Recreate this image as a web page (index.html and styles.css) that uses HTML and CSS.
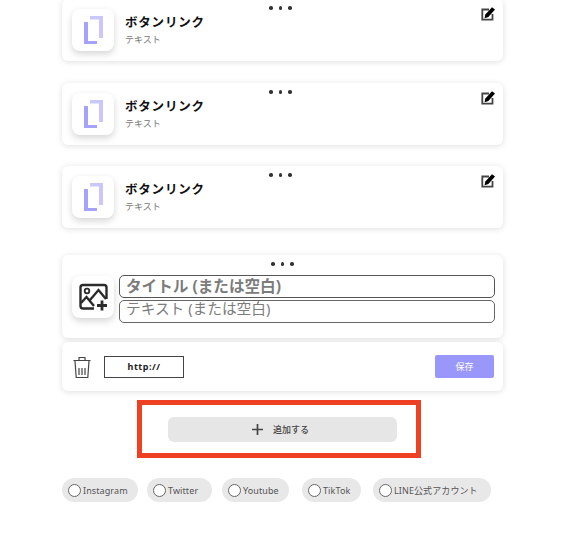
FILE: index.html
```html
<!DOCTYPE html>
<html>

<head>
    <meta charset="utf-8">
    <title>リンク編集</title>
    <link rel="stylesheet" href="styles.css">
</head>

<body>
    <div id="page">
        <div class="card link-card">
            <span class="dots"><i></i><i></i><i></i></span>
            <div class="tile">
                <svg width="42" height="42" viewBox="0 0 42 42">
                    <path fill="#c9c7fc" d="M18 7h13v22h-4V10.500h-9z" />
                    <path fill="#a5a2fb" d="M12 13h4v19h9v3H12z" />
                </svg>
            </div>
            <div class="link-text">
                <div class="link-title">ボタンリンク</div>
                <div class="link-sub">テキスト</div>
            </div>
            <svg class="edit" width="14" height="14" viewBox="0 0 14 14">
                <path fill="none" stroke="#444" stroke-width="1.800" d="M8 2.500H1.300v10.200h10.200V7" />
                <path fill="#000" d="M11 .2l3 2.300-6.600 7.500-3.800 1.200.7-3.700z" />
            </svg>
        </div>
        <div class="card link-card">
            <span class="dots"><i></i><i></i><i></i></span>
            <div class="tile">
                <svg width="42" height="42" viewBox="0 0 42 42">
                    <path fill="#c9c7fc" d="M18 7h13v22h-4V10.500h-9z" />
                    <path fill="#a5a2fb" d="M12 13h4v19h9v3H12z" />
                </svg>
            </div>
            <div class="link-text">
                <div class="link-title">ボタンリンク</div>
                <div class="link-sub">テキスト</div>
            </div>
            <svg class="edit" width="14" height="14" viewBox="0 0 14 14">
                <path fill="none" stroke="#444" stroke-width="1.800" d="M8 2.500H1.300v10.200h10.200V7" />
                <path fill="#000" d="M11 .2l3 2.300-6.600 7.500-3.800 1.200.7-3.700z" />
            </svg>
        </div>
        <div class="card link-card">
            <span class="dots"><i></i><i></i><i></i></span>
            <div class="tile">
                <svg width="42" height="42" viewBox="0 0 42 42">
                    <path fill="#c9c7fc" d="M18 7h13v22h-4V10.500h-9z" />
                    <path fill="#a5a2fb" d="M12 13h4v19h9v3H12z" />
                </svg>
            </div>
            <div class="link-text">
                <div class="link-title">ボタンリンク</div>
                <div class="link-sub">テキスト</div>
            </div>
            <svg class="edit" width="14" height="14" viewBox="0 0 14 14">
                <path fill="none" stroke="#444" stroke-width="1.800" d="M8 2.500H1.300v10.200h10.200V7" />
                <path fill="#000" d="M11 .2l3 2.300-6.600 7.500-3.800 1.200.7-3.700z" />
            </svg>
        </div>

        <div class="card edit-card">
            <span class="dots"><i></i><i></i><i></i></span>
            <div class="tile">
                <svg width="42" height="42" viewBox="0 0 42 42" fill="none" stroke="#2b2b2b" stroke-width="2.400">
                    <path d="M22 32.500H11a2.500 2.500 0 0 1-2.500-2.500V11.500A2.500 2.500 0 0 1 11 9h21a2.500 2.500 0 0 1 2.500 2.500V23" />
                    <circle cx="15" cy="15" r="2.300" stroke-width="1.800" />
                    <path d="M9 27l5.500-6 7.500 9M18 24l8.500-10 7.500 9" />
                    <path stroke-width="2.800" d="M30 24.500v10M25 29.500h10" />
                </svg>
            </div>
            <div class="edit-fields">
                <input class="field field-title" type="text" placeholder="タイトル (または空白)">
                <input class="field field-sub" type="text" placeholder="テキスト (または空白)">
            </div>
        </div>
        <div class="card url-card">
            <svg class="trash" width="20" height="24" viewBox="0 0 20 24" fill="none" stroke="#444" stroke-width="1.200">
                <path d="M1.500 5.500h17M7 5V2.500h6V5M3 6l1.200 16.500h11.600L17 6" />
                <path d="M7 13v7M10 13v7M13 13v7" />
            </svg>
            <div class="url-box">http://</div>
            <button class="save">保存</button>
        </div>

        <div class="add-frame">
            <button class="add">
                <svg width="11" height="11" viewBox="0 0 11 11">
                    <path fill="none" stroke="#444" stroke-width="1.700" d="M5.500 0v11M0 5.500h11" />
                </svg>
                <span>追加する</span>
            </button>
        </div>

        <div class="pills">
            <label class="pill pill-instagram"><span class="radio"></span>Instagram</label>
            <label class="pill pill-twitter"><span class="radio"></span>Twitter</label>
            <label class="pill pill-youtube"><span class="radio"></span>Youtube</label>
            <label class="pill pill-tiktok"><span class="radio"></span>TikTok</label>
            <label class="pill pill-line"><span class="radio"></span>LINE公式アカウント</label>
        </div>
    </div>
</body>

</html>
```

FILE: styles.css
```css
html,
body {
    height: 100%;
    overflow: hidden;
}

body {
    margin: 0;
    background: #fff;
    color: #222;
    font-family: "Noto Sans", "Noto Sans CJK JP", sans-serif;
}

#page {
    width: 441px;
    margin: -1px 0 0 62px;
    display: flex;
    flex-direction: column;
}

.card {
    position: relative;
    background: #fff;
    border-radius: 6px;
    box-shadow: 0 1px 6px rgba(0, 0, 0, 0.13);
    display: flex;
    align-items: center;
}

.dots {
    position: absolute;
    top: 7px;
    left: 207px;
    display: flex;
    gap: 6px;
}

.dots i {
    width: 3.500px;
    height: 3.500px;
    border-radius: 50%;
    background: #333;
}

.tile {
    width: 42px;
    height: 42px;
    border-radius: 8px;
    background: #fff;
    box-shadow: 0 3px 7px rgba(0, 0, 0, 0.17);
    flex-shrink: 0;
}

.tile svg {
    display: block;
}

.link-card {
    height: 62px;
    margin-bottom: 22px;
    padding: 0 10px;
}

.link-card:nth-child(2) {
    margin-bottom: 21px;
}

.link-card:nth-child(3) {
    margin-bottom: 27px;
}

.link-text {
    margin-left: 11px;
}

.link-title {
    font-size: 12.500px;
    line-height: 17px;
    font-weight: 700;
    letter-spacing: 0.8px;
    color: #111;
}

.link-sub {
    font-size: 9px;
    line-height: 13px;
    margin-top: 2px;
    color: #777;
}

.edit {
    position: absolute;
    top: 8px;
    right: 8px;
}

.edit-card {
    height: 83px;
    padding: 0 8px 0 10px;
    margin-bottom: 4px;
}

.edit-card .dots {
    left: 209px;
}

.edit-fields {
    flex: 1;
    margin-left: 5px;
    display: flex;
    flex-direction: column;
    gap: 2px;
    margin-top: 4px;
}

.field {
    box-sizing: border-box;
    width: 100%;
    height: 23px;
    padding: 0 6px;
    border: 1.500px solid #666;
    border-radius: 5px;
    outline: none;
    background: #fff;
    font-family: inherit;
}

.field::placeholder {
    color: #7c7c7c;
    opacity: 1;
}

.field-title {
    font-size: 15.600px;
    font-weight: 700;
    border-color: #555;
}

.field-sub {
    font-size: 14.700px;
    padding-bottom: 6px;
}

.url-card {
    height: 49px;
    padding: 0 9px 0 10px;
}

.trash {
    display: block;
}

.url-box {
    box-sizing: border-box;
    width: 80px;
    height: 22px;
    margin-left: 12px;
    border: 1px solid #444;
    font-size: 9px;
    font-weight: 700;
    letter-spacing: 0.5px;
    line-height: 20px;
    text-align: center;
}

.save {
    width: 59px;
    height: 23px;
    margin-left: auto;
    padding: 0;
    border: none;
    border-radius: 2px;
    background: #9a97fb;
    color: #fff;
    font-family: inherit;
    font-size: 9px;
}

.add-frame {
    box-sizing: border-box;
    width: 284px;
    height: 58px;
    margin: 9px 0 20px 75px;
    padding-left: 7px;
    border: 5px solid #ee4023;
    display: flex;
    align-items: center;
    justify-content: center;
}

.add {
    width: 229px;
    height: 25px;
    flex-shrink: 0;
    padding: 1px 4px 0 0;
    border: none;
    border-radius: 6px;
    background: #e6e6e6;
    color: #444;
    font-family: inherit;
    font-size: 9px;
    font-weight: 500;
    display: flex;
    align-items: center;
    justify-content: center;
    gap: 10px;
}

.pills {
    display: flex;
}

.pill {
    box-sizing: border-box;
    height: 24px;
    padding-left: 6px;
    border-radius: 12px;
    background: #e8e8e8;
    color: #555;
    font-size: 9px;
    letter-spacing: 0.1px;
    display: flex;
    align-items: center;
    gap: 2px;
}

.pill-instagram {
    width: 76px;
    margin-right: 9px;
}

.pill-twitter {
    width: 65px;
    margin-right: 10px;
}

.pill-youtube {
    width: 67px;
    margin-right: 13px;
}

.pill-tiktok {
    width: 59px;
    margin-right: 12px;
}

.pill-line {
    width: 118px;
}

.radio {
    box-sizing: border-box;
    width: 13px;
    height: 13px;
    border: 1px solid #666;
    border-radius: 50%;
    background: #fff;
    flex-shrink: 0;
}
```
